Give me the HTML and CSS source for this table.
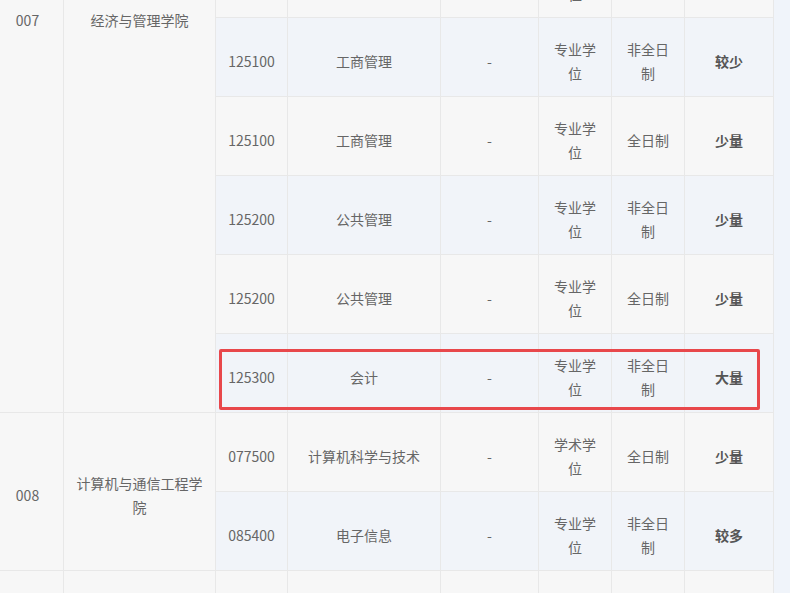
FILE: index.html
```html
<!DOCTYPE html>
<html lang="zh-CN">
<head>
    <meta charset="UTF-8">
    <title>招生专业目录</title>
<link rel="stylesheet" href="styles.css">
</head>
<body>
<div class="viewport">
    <div class="sheet">
        <table class="plan">
            <colgroup>
                <col class="c-code"><col class="c-school"><col class="c-major"><col class="c-name">
                <col class="c-dir"><col class="c-type"><col class="c-mode"><col class="c-amount">
            </colgroup>
            <tr>
                <td rowspan="6" class="top">007</td>
                <td rowspan="6" class="top">经济与管理学院</td>
                <td>120200</td><td>工商管理</td><td>-</td><td>专业学位</td><td>全日制</td><td class="amount">少量</td>
            </tr>
            <tr class="alt">
                <td>125100</td><td>工商管理</td><td>-</td><td>专业学位</td><td>非全日制</td><td class="amount">较少</td>
            </tr>
            <tr>
                <td>125100</td><td>工商管理</td><td>-</td><td>专业学位</td><td>全日制</td><td class="amount">少量</td>
            </tr>
            <tr class="alt">
                <td>125200</td><td>公共管理</td><td>-</td><td>专业学位</td><td>非全日制</td><td class="amount">少量</td>
            </tr>
            <tr>
                <td>125200</td><td>公共管理</td><td>-</td><td>专业学位</td><td>全日制</td><td class="amount">少量</td>
            </tr>
            <tr class="alt">
                <td>125300</td><td>会计</td><td>-</td><td>专业学位</td><td>非全日制</td><td class="amount">大量</td>
            </tr>
            <tr>
                <td rowspan="2">008</td>
                <td rowspan="2">计算机与通信工程学院</td>
                <td>077500</td><td>计算机科学与技术</td><td>-</td><td>学术学位</td><td>全日制</td><td class="amount">少量</td>
            </tr>
            <tr class="alt">
                <td>085400</td><td>电子信息</td><td>-</td><td>专业学位</td><td>非全日制</td><td class="amount">较多</td>
            </tr>
            <tr>
                <td>009</td><td>外国语学院</td><td>055100</td><td>翻译</td><td>-</td><td>专业学位</td><td>全日制</td><td class="amount">少量</td>
            </tr>
        </table>
        <div class="mark"></div>
    </div>
    <div class="strip"></div>
</div>
</body>
</html>
```

FILE: styles.css
```css
body{
    margin: 0;
    background-color: #f7f7f7;
    font-family: "Noto Sans CJK SC", "Microsoft YaHei", sans-serif;
}
.viewport{
    display: flex;
    height: 593px;
    overflow: hidden;
}
.sheet{
    position: relative;
    margin: -62px 0 0 -9px;
}
.plan{
    border-collapse: collapse;
    table-layout: fixed;
    width: 782px;
    font-size: 14px;
    color: #666;
}
.c-code{width: 72px;}
.c-school{width: 152px;}
.c-major{width: 72px;}
.c-name{width: 153px;}
.c-dir{width: 98px;}
.c-type{width: 73px;}
.c-mode{width: 73px;}
.c-amount{width: 89px;}
.plan tr{
    height: 79px;
    background-color: #f7f7f7;
}
.plan tr.alt td{
    background-color: #f1f4f9;
}
.plan td{
    border: 1px solid #e8e8e8;
    padding: 7px 10px 0;
    line-height: 24px;
    text-align: center;
    vertical-align: middle;
    word-break: break-all;
}
.plan td.top{
    vertical-align: top;
    padding-top: 69px;
    background-color: #f7f7f7;
}
.amount{
    font-weight: bold;
    color: #555;
}
.strip{
    flex: 1;
    background-color: #f0f4fa;
}
.mark{
    position: absolute;
    left: 228px;
    top: 411px;
    width: 535px;
    height: 55px;
    border: 3px solid #e8474b;
    border-radius: 2px;
}
```
